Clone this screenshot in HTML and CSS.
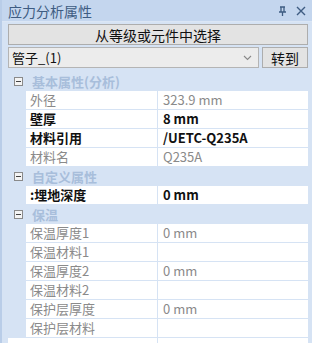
FILE: index.html
```html
<!DOCTYPE html>
<html lang="zh">
<head>
  <meta charset="UTF-8" />
  <title>应力分析属性</title>
  <link rel="stylesheet" href="styles.css">
</head>
<body>
  <div class="pencere">
    <div class="baslik">
      <span class="baslik-yazi">应力分析属性</span>
      <span class="baslik-ikonlar">
        <svg width="9" height="10" viewBox="0 0 9 10"><path d="M2 1h5M3 1v5M6 1v5M1 6h7M4.5 6v4" stroke="#3e5c82" stroke-width="1.3" fill="none"/></svg>
        <svg width="10" height="10" viewBox="0 0 10 10"><path d="M1 1l8 8M9 1l-8 8" stroke="#3e5c82" stroke-width="1.4"/></svg>
      </span>
    </div>

    <div class="govde">
      <button class="secim-btn">从等级或元件中选择</button>

      <div class="secim-satir">
        <div class="combo">
          <span>管子_(1)</span>
          <svg width="9" height="6" viewBox="0 0 9 6"><path d="M1 1l3.5 3.5L8 1" stroke="#888" stroke-width="1.1" fill="none"/></svg>
        </div>
        <button class="git-btn">转到</button>
      </div>

      <div class="tablo">
        <div class="kategori"><span class="kutu-eksi"></span>基本属性(分析)</div>
        <div class="satir soluk"><div class="ad">外径</div><div class="deger">323.9 mm</div></div>
        <div class="satir kalin"><div class="ad">壁厚</div><div class="deger">8 mm</div></div>
        <div class="satir kalin"><div class="ad">材料引用</div><div class="deger">/UETC-Q235A</div></div>
        <div class="satir soluk"><div class="ad">材料名</div><div class="deger">Q235A</div></div>

        <div class="kategori"><span class="kutu-eksi"></span>自定义属性</div>
        <div class="satir kalin"><div class="ad">:埋地深度</div><div class="deger">0 mm</div></div>

        <div class="kategori"><span class="kutu-eksi"></span>保温</div>
        <div class="satir soluk"><div class="ad">保温厚度1</div><div class="deger">0 mm</div></div>
        <div class="satir soluk"><div class="ad">保温材料1</div><div class="deger"></div></div>
        <div class="satir soluk"><div class="ad">保温厚度2</div><div class="deger">0 mm</div></div>
        <div class="satir soluk"><div class="ad">保温材料2</div><div class="deger"></div></div>
        <div class="satir soluk"><div class="ad">保护层厚度</div><div class="deger">0 mm</div></div>
        <div class="satir soluk"><div class="ad">保护层材料</div><div class="deger"></div></div>
        <div class="satir alt"><div class="ad"></div><div class="deger"></div></div>
      </div>
    </div>
  </div>
</body>
</html>
```

FILE: styles.css
```css
* {
  margin: 0;
  padding: 0;
  box-sizing: border-box;
}

body {
  font-family: "Noto Sans CJK SC", "Noto Sans", sans-serif;
  font-size: 13px;
  background: #d6e3f4;
  overflow: hidden;
}

.pencere {
  width: 312px;
  height: 343px;
  overflow: hidden;
  border-left: 2px solid #b9cde8;
}

/* Pencere başlığı */
.baslik {
  height: 22px;
  background: #c4d6ee;
  display: flex;
  align-items: center;
  justify-content: space-between;
  padding: 0 6px 0 6px;
  border-bottom: 1px solid #dbe6f5;
}

.baslik-yazi {
  color: #3e5c82;
  font-size: 14px;
  line-height: 22px;
}

.baslik-ikonlar {
  display: flex;
  gap: 9px;
  align-items: center;
}

.govde {
  padding: 2px 4px 0 6px;
}

.secim-btn {
  display: block;
  width: 100%;
  height: 21px;
  background: #e3e3e3;
  border: 1px solid #adadad;
  font-family: inherit;
  font-size: 14px;
  color: #111;
  line-height: 18px;
}

.secim-satir {
  display: flex;
  gap: 3px;
  margin-top: 2px;
  height: 21px;
}

.combo {
  flex: 1;
  background: #ececec;
  border: 1px solid #b4b4b4;
  display: flex;
  align-items: center;
  justify-content: space-between;
  padding: 0 6px 0 3px;
  font-size: 13px;
  color: #111;
}

.git-btn {
  width: 46px;
  background: #e3e3e3;
  border: 1px solid #adadad;
  font-family: inherit;
  font-size: 14px;
  color: #111;
}

/* Özellik tablosu */
.tablo {
  margin-top: 4px;
}

.kategori {
  height: 18px;
  margin-bottom: 1px;
  display: flex;
  align-items: center;
  font-weight: bold;
  color: #a8bedb;
  font-size: 13px;
}

.kutu-eksi {
  width: 9px;
  height: 9px;
  border: 1px solid #8a8a8a;
  background: #f4f4f4;
  margin: 0 9px 0 6px;
  position: relative;
}

.kutu-eksi::after {
  content: "";
  position: absolute;
  left: 1px;
  top: 3px;
  width: 5px;
  height: 1px;
  background: #444;
}

.satir {
  display: flex;
  height: 18px;
  margin-bottom: 1px;
  padding-left: 18px;
  line-height: 18px;
}

.satir .ad {
  width: 131px;
  background: #fff;
  padding-left: 4px;
  margin-right: 1px;
  white-space: nowrap;
}

.satir .deger {
  flex: 1;
  background: #fff;
  padding-left: 5px;
}

.satir.soluk {
  color: #8a8a8a;
}

.satir.kalin {
  color: #111;
  font-weight: bold;
}

.satir.alt {
  padding-left: 0;
}

.satir.alt .ad {
  width: 149px;
}
```
